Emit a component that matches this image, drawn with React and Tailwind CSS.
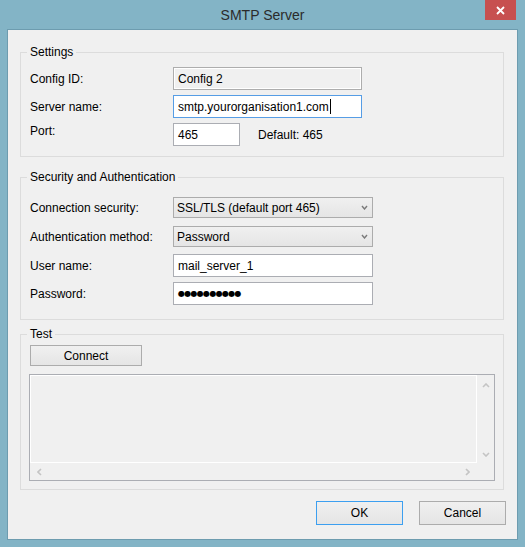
import React from "react";

const FONT = "font-['Liberation_Sans',Arial,sans-serif]";

function Chev({ dir = "down", color = "#c4c4c4", w = 8, h = 5, sw = 1.6 }) {
  const pts = {
    down: `1,1 ${w / 2},${h - 1} ${w - 1},1`,
    up: `1,${h - 1} ${w / 2},1 ${w - 1},${h - 1}`,
  };
  if (dir === "left" || dir === "right") {
    const p = dir === "right" ? `1,1 ${h - 1},${w / 2} 1,${w - 1}` : `${h - 1},1 1,${w / 2} ${h - 1},${w - 1}`;
    return (
      <svg width={h} height={w} viewBox={`0 0 ${h} ${w}`}>
        <polyline points={p} fill="none" stroke={color} strokeWidth={sw} />
      </svg>
    );
  }
  return (
    <svg width={w} height={h} viewBox={`0 0 ${w} ${h}`}>
      <polyline points={pts[dir]} fill="none" stroke={color} strokeWidth={sw} />
    </svg>
  );
}

function GroupLabel({ children }) {
  return (
    <div className="-mt-[9px] ml-[6px] w-fit px-[3px] bg-[#f0f0f0] leading-[16px] text-black">{children}</div>
  );
}

function TextBox({ children, className = "", focused = false, disabled = false }) {
  return (
    <div
      className={`h-[23px] border flex items-center pl-[4px] leading-[16px] ${
        focused ? "border-[#569de5] bg-white" : disabled ? "border-[#adadad] bg-[#f0f0f0] shadow-[inset_0_0_0_1px_#ffffff]" : "border-[#abadb3] bg-white"
      } ${className}`}
    >
      {children}
    </div>
  );
}

function Combo({ children }) {
  return (
    <div className="w-[200px] h-[21px] border border-[#acacac] bg-gradient-to-b from-[#f0f0f0] to-[#e5e5e5] flex items-center justify-between pl-[3px] pr-[4px] leading-[16px]">
      <span>{children}</span>
      <Chev dir="down" color="#7a7a7a" w={7} h={5} sw={1.4} />
    </div>
  );
}

function Button({ children, className = "", def = false }) {
  return (
    <div
      className={`border flex items-center justify-center bg-gradient-to-b from-[#f0f0f0] to-[#e5e5e5] leading-[16px] ${
        def ? "border-[#3c9ff0]" : "border-[#acacac]"
      } ${className}`}
    >
      {children}
    </div>
  );
}

export default function App() {
  return (
    <div className={`w-[525px] h-[547px] bg-[#83b4c6] flex flex-col ${FONT} text-[12px] text-black`}>
      {/* title bar */}
      <div className="h-[29px] grid grid-cols-[1fr_auto_1fr] items-start">
        <div />
        <div className="pt-[6px] text-[14px] leading-[18px] text-[#2b2b2b]">SMTP Server</div>
        <div className="flex justify-end pr-[9px]">
          <div className="w-[31px] h-[20px] bg-[#c75050] flex items-center justify-center">
            <svg width="9" height="9" viewBox="0 0 9 9">
              <path d="M1 1 L8 8 M8 1 L1 8" stroke="#ffffff" strokeWidth="1.8" />
            </svg>
          </div>
        </div>
      </div>

      {/* client area */}
      <div className="mx-[7px] h-[511px] border border-[#6d9caf] bg-[#f0f0f0] flex flex-col">
        {/* Settings */}
        <div className="mt-[22px] ml-[12px] w-[484px] border border-[#dcdcdc] pb-[10px]">
          <GroupLabel>Settings</GroupLabel>
          <div className="mt-[7px] pl-[9px] grid grid-cols-[143px_auto] gap-y-[5px] items-center">
            <div>Config ID:</div>
            <TextBox className="w-[189px]" disabled>Config 2</TextBox>
            <div>Server name:</div>
            <TextBox className="w-[189px]" focused>
              <span>smtp.yourorganisation1.com</span>
              <span className="ml-[1px] w-[1px] h-[15px] bg-black" />
            </TextBox>
            <div className="self-start leading-[16px]">Port:</div>
            <div className="flex items-center">
              <TextBox className="w-[67px]">465</TextBox>
              <div className="ml-[18px] mt-[1px]">Default: 465</div>
            </div>
          </div>
        </div>

        {/* Security and Authentication */}
        <div className="mt-[20px] ml-[12px] w-[484px] border border-[#dcdcdc] pb-[14px]">
          <GroupLabel>Security and Authentication</GroupLabel>
          <div className="mt-[12px] pl-[9px] flex flex-col">
            <div className="grid grid-cols-[143px_auto] items-center">
              <div>Connection security:</div>
              <Combo>SSL/TLS (default port 465)</Combo>
            </div>
            <div className="mt-[8px] grid grid-cols-[143px_auto] items-center">
              <div>Authentication method:</div>
              <Combo>Password</Combo>
            </div>
            <div className="mt-[7px] grid grid-cols-[143px_auto] items-center">
              <div>User name:</div>
              <TextBox className="w-[200px]">mail_server_1</TextBox>
            </div>
            <div className="mt-[5px] grid grid-cols-[143px_auto] items-center">
              <div>Password:</div>
              <TextBox className="w-[200px]">
                <span className="font-['DejaVu_Sans',sans-serif] text-[8px] tracking-[-0.7px] leading-[10px]">●●●●●●●●●●</span>
              </TextBox>
            </div>
          </div>
        </div>

        {/* Test */}
        <div className="mt-[14px] ml-[12px] w-[484px] border border-[#dcdcdc] pb-[8px] px-[8px]">
          <div className="-ml-[8px]">
            <GroupLabel>Test</GroupLabel>
          </div>
          <Button className="mt-[3px] ml-[1px] w-[112px] h-[21px]">Connect</Button>
          <div className="mt-[8px] h-[107px] border border-[#abadb3] grid grid-cols-[1fr_17px] grid-rows-[1fr_17px]">
            <div className="border border-white bg-[#f0f0f0]" />
            <div className="flex flex-col items-center justify-between pt-[8px] pb-[6px]">
              <Chev dir="up" w={8} h={5} />
              <Chev dir="down" w={8} h={5} />
            </div>
            <div className="flex items-center justify-between px-[7px]">
              <Chev dir="left" w={8} h={5} />
              <Chev dir="right" w={8} h={5} />
            </div>
            <div />
          </div>
        </div>

        {/* buttons */}
        <div className="mt-[11px] flex justify-end gap-[16px] pr-[11px]">
          <Button def className="w-[87px] h-[24px]">OK</Button>
          <Button className="w-[87px] h-[24px]">Cancel</Button>
        </div>
      </div>
    </div>
  );
}
